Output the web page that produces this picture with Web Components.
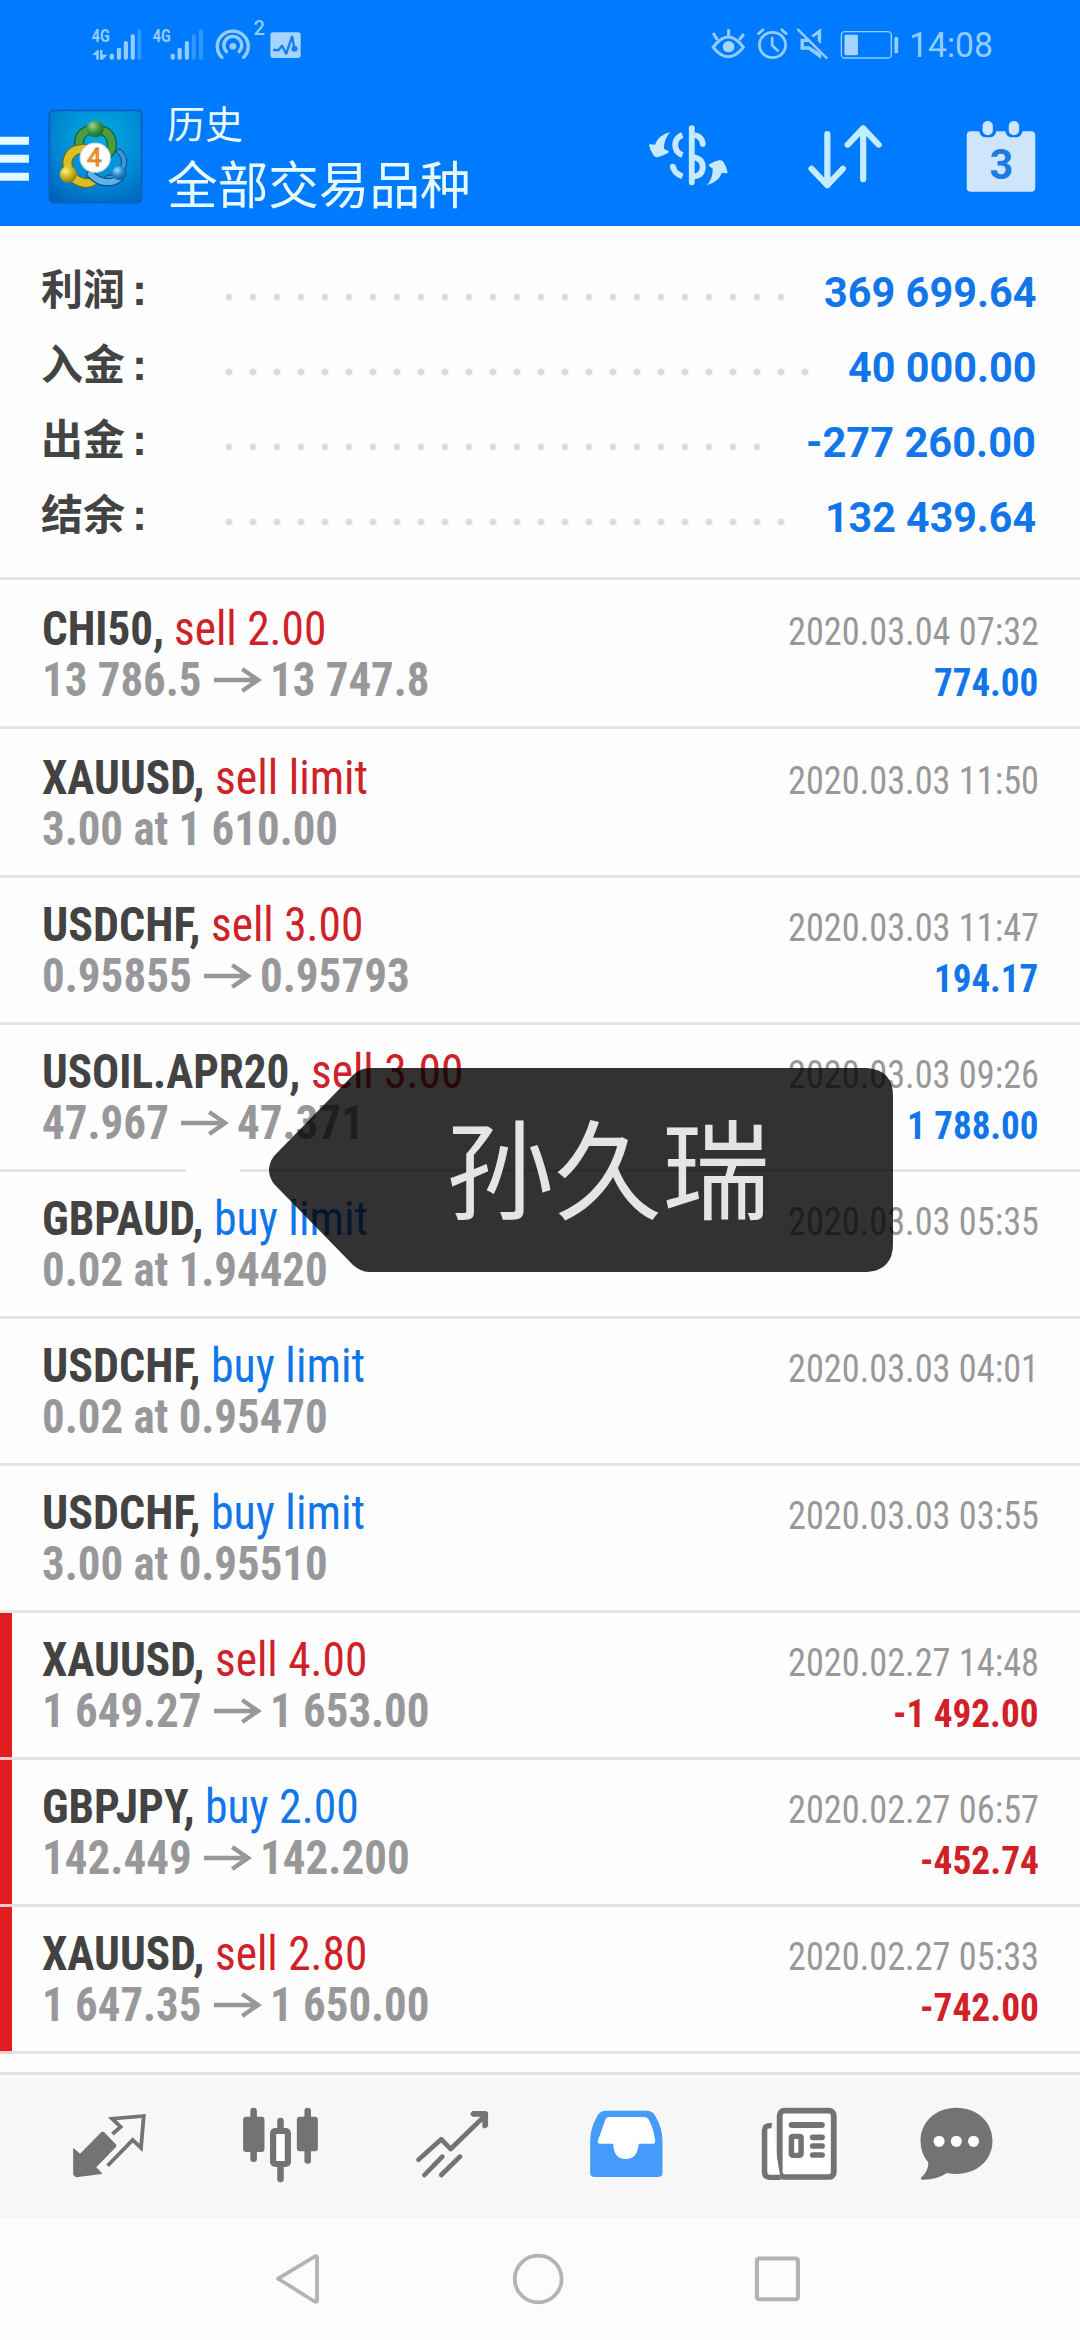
<!DOCTYPE html>
<html lang="zh-CN">
<head>
<meta charset="utf-8">
<title>历史</title>
<style>
html,body{margin:0;padding:0;background:#fff}
body{width:1080px;height:2340px;overflow:hidden}
</style>
</head>
<body>
<history-app></history-app>
<script>
// Icon art sits on a grid finer than CSS pixels: 2.9037 units across, 3 units down.
const UX = 2.9037, UY = 3;
const bars = (xs, dim) => xs.map((x, i) => {
  const top = [160, 142, 122, 102, 87][i];
  return `<rect x="${x - 6}" y="${top}" width="12" height="${178 - top}" rx="5" fill="${i >= dim ? '#2f97ff' : '#93cdff'}"/>`;
}).join('');
const ICONS = {
  menu: [0, 400, 84, 150, `<path fill="#e6f9ff" d="M0 411h84v24H0zM0 465h84v24H0zM0 519h84v24H0z"/>`],
  logo: [138, 327, 276, 285, `
    <defs>
      <radialGradient id="bg" cx=".55" cy=".3" r=".85"><stop offset="0" stop-color="#00aee2"/><stop offset=".55" stop-color="#0089d4"/><stop offset="1" stop-color="#0060b8"/></radialGradient>
      <radialGradient id="g" cx=".35" cy=".3" r=".8"><stop offset="0" stop-color="#9ed38c"/><stop offset=".5" stop-color="#3a9440"/><stop offset="1" stop-color="#176127"/></radialGradient>
      <radialGradient id="y" cx=".35" cy=".3" r=".8"><stop offset="0" stop-color="#fff27a"/><stop offset=".5" stop-color="#c9b31c"/><stop offset="1" stop-color="#7d7010"/></radialGradient>
      <radialGradient id="b" cx=".35" cy=".3" r=".8"><stop offset="0" stop-color="#9fdcff"/><stop offset=".5" stop-color="#2b86cf"/><stop offset="1" stop-color="#0d4e99"/></radialGradient>
    </defs>
    <rect x="142" y="331" width="268" height="277" rx="12" fill="url(#bg)" stroke="#0b5fc0" stroke-width="5"/>
    <g fill="none" stroke-linecap="round">
      <path d="M312 535q44-6 47-49q0-18-14-31" stroke="#0c4d8e" stroke-width="18"/><path d="M312 535q44-6 47-49q0-18-14-31" stroke="#3f97d0" stroke-width="12"/>
      <path d="M228 432q0-42 47-45q47 3 49 47q0 16-12 28" stroke="#145c2c" stroke-width="29"/><path d="M228 432q0-42 47-45q47 3 49 47q0 16-12 28" stroke="#4b9c42" stroke-width="22"/>
      <path d="M242 446q-44 2-48 42q4 52 50 61q18 2 28-9" stroke="#6f690c" stroke-width="30"/><path d="M242 446q-44 2-48 42q4 52 50 61q18 2 28-9" stroke="#d6bf28" stroke-width="23"/>
      <path d="M262 523q20 22 46 24q33 0 44-25" stroke="#0c4d8e" stroke-width="25"/><path d="M262 523q20 22 46 24q33 0 44-25" stroke="#5db2e6" stroke-width="18"/>
    </g>
    <circle cx="275" cy="387" r="25" fill="url(#g)"/><circle cx="197" cy="523" r="25" fill="url(#y)"/><circle cx="345" cy="519" r="21" fill="url(#b)"/>
    <circle cx="275" cy="473" r="44" fill="#fff" stroke="#c6cfd4" stroke-width="3"/>
    <text x="273" y="499" text-anchor="middle" font-family="Roboto" font-weight="400" font-size="76" fill="#f7a14a" stroke="#dd7722" stroke-width="2.500">4</text>`],
  signalA: [256, 56, 162, 128, `<text x="267" y="126" textLength="52" lengthAdjust="spacingAndGlyphs" font-family="Roboto" font-weight="700" font-size="57" fill="#93cdff">4G</text>
    <path fill="#93cdff" d="M268 163l16-14h3v29h-7v-13zM291 149h7v14h15l-15 15h-7z"/>${bars([325, 346, 366, 386, 405], 4)}`],
  signalB: [434, 56, 162, 128, `<text x="445" y="126" textLength="52" lengthAdjust="spacingAndGlyphs" font-family="Roboto" font-weight="700" font-size="57" fill="#93cdff">4G</text>${bars([503, 523, 544, 564, 585], 3)}`],
  hotspot: [620, 34, 156, 150, `<g fill="none" stroke="#93cdff" stroke-width="10" stroke-linecap="round"><path d="M643 173A45 46 0 1 1 706 173"/><path d="M656 156A26 27 0 1 1 693 156"/></g><circle cx="675" cy="140" r="10" fill="#93cdff"/>
    <text x="735" y="106" textLength="33" lengthAdjust="spacingAndGlyphs" font-family="Roboto" font-size="62" font-weight="500" fill="#93cdff">2</text>`],
  pulse: [780, 90, 96, 90, `<rect x="784" y="97" width="88" height="77" rx="8" fill="#a6d3ff"/><path d="M792 150h16l10-13 12 24 17-51 7 36" fill="none" stroke="#1780ee" stroke-width="7" stroke-linejoin="round"/><circle cx="854" cy="146" r="9" fill="#1780ee"/>`],
  eye: [494, 82, 108, 102, `<g fill="none" stroke="#93cdff" stroke-width="9" stroke-linecap="round"><path d="M503 143q44-62 88 0q-44 56-88 0z" stroke-linejoin="round"/><path d="M548 92v17M505 103l9 15M590 106l-9 12"/></g><circle cx="548" cy="141" r="17" fill="#a6d3ff"/>`],
  alarm: [626, 82, 96, 102, `<g fill="none" stroke="#93cdff" stroke-width="8" stroke-linecap="round"><circle cx="674" cy="136" r="38"/><path d="M673 115v22l16 16M633 102l13-12M714 102l-13-12"/></g>`],
  mute: [744, 82, 98, 102, `<path d="M788 108l29-23v48l-10-9v-20l-12 9zM779 117h-22v33h23l37 28v-14l-10-9-25-15h-15v-13h18z" fill="#93cdff"/><path d="M750 90l83 85" stroke="#93cdff" stroke-width="7" stroke-linecap="round"/>`],
  battery: [872, 86, 174, 96, `<rect x="876" y="94" width="145" height="79" rx="10" fill="none" stroke="#93cdff" stroke-width="4"/><rect x="885" y="103" width="39" height="62" rx="4" fill="#a6d3ff"/><rect x="1030" y="109" width="11" height="50" rx="5" fill="#93cdff"/>`],
  currency: [312, 365, 242, 200, `<path d="M442 383v163" stroke="#c6eaff" stroke-width="17" stroke-linecap="round"/>
    <g fill="none" stroke="#c6eaff" stroke-width="17"><path d="M415 404q-21 8-21 30t21 30"/><path d="M450 404q22 5 24 26" /><path d="M442 470q32 3 32 30t-32 30"/><path d="M388 500q3 19 27 28"/></g>
    <g fill="#c6eaff"><circle cx="474" cy="431" r="8.500"/><circle cx="387" cy="499" r="8.500"/><path d="M379 395q-18 22-18 50l14 8q2 2-2 5q-18 10-32 13q-6 0-10-6q-10-14-13-31q0-3 4-2l13 1q8-27 44-38z"/><path d="M486 555q17-20 17-50l-11-8q-2-3 2-6q15-9 29-12q7 0 11 6q9 14 12 31q0 4-4 3l-13-2q-6 25-43 38z"/></g>`],
  sort: [772, 365, 226, 210, `<path d="M834 401v154M788 505l46 50 45-50M938 537V384M893 433l45-49 45 49" fill="none" stroke="#c2edff" stroke-width="18" stroke-linecap="round" stroke-linejoin="round"/>`],
  calendar: [1234, 356, 210, 224, `<rect x="1239" y="393" width="199" height="181" rx="12" fill="#cfe5fc"/><rect x="1275" y="356" width="50" height="55" rx="20" fill="#007aff"/><rect x="1351" y="356" width="50" height="55" rx="20" fill="#007aff"/><rect x="1285" y="362" width="30" height="43" rx="15" fill="#cfe5fc"/><rect x="1361" y="362" width="30" height="43" rx="15" fill="#cfe5fc"/>
    <text x="1340" y="535" text-anchor="middle" textLength="69" lengthAdjust="spacingAndGlyphs" font-family="Roboto" font-weight="700" font-size="126" fill="#1c7ce6">3</text>`],
  arrow: [621, 258, 131, 78, `<path d="M621 297h128M703 264l46 33-46 33" fill="none" stroke="#98989b" stroke-width="13"/>`],
  quotes: [196, 120, 240, 260, `<path d="M211 263l20 18 63-66 6 0 36 39 0 6-58 62 16 16v4l-75 10-8-8z" fill="#737373"/><path d="M325 222l24-21-25-25 92-8-8 96-24-24-73 77" fill="none" stroke="#737373" stroke-width="11"/>`],
  chart: [694, 120, 240, 260, `<g fill="#737373"><rect x="706" y="170" width="62" height="106" rx="9"/><rect x="727" y="143" width="19" height="163" rx="9"/><rect x="862" y="170" width="61" height="104" rx="9"/><rect x="884" y="143" width="19" height="168" rx="9"/><rect x="805" y="173" width="19" height="36" rx="9"/><rect x="805" y="314" width="19" height="53" rx="9"/></g><rect x="793" y="213" width="43" height="99" rx="6" fill="#fff" stroke="#737373" stroke-width="18"/>`],
  trade: [1194, 120, 240, 260, `<path d="M1216 299l66-61 27 29 100-100M1233 345l52-55M1282 345l54-55" fill="none" stroke="#737373" stroke-width="14" stroke-linecap="round" stroke-linejoin="round"/><path d="M1373 153h36q9 0 9 9v36q-8 13-17 3v-26l-6-5h-22q-13-8 0-17z" fill="#737373"/>`],
  inbox: [130, 120, 240, 260, `<path d="M189 152h121q15 0 23 14q22 38 22 76v96q0 13-13 13H158q-13 0-13-13v-96q0-38 22-76q8-14 22-14z" fill="#449bfa"/><path d="M198 171h102q11 0 16 9q13 27 18 62q0 9-6 9h-42q-3 46-38 46t-36-46h-38q-10 0-6-11l20-58q4-11 10-11z" fill="#fff"/>`],
  news: [634, 120, 240, 260, `<rect x="697" y="152" width="157" height="199" rx="14" fill="#fff" stroke="#737373" stroke-width="17"/><path d="M674 197q-21-2-21 14v124q0 17 16 17h30" fill="#fff" stroke="#737373" stroke-width="16"/><rect x="723" y="186" width="105" height="18" rx="9" fill="#737373"/><rect x="731" y="229" width="28" height="57" rx="4" fill="#fff" stroke="#737373" stroke-width="16"/><path d="M793 232h27M793 258h27M793 285h27" stroke="#737373" stroke-width="17" stroke-linecap="round"/>`],
  chat: [1090, 120, 240, 260, `<path d="M1210 143c60 0 105 42 105 100s-46 99-105 99q-14 0-27-3q-32 21-70 20q-10 0-4-7q19-19 20-44q-23-28-23-65c0-58 45-100 104-100z" fill="#737373"/><g fill="#fff"><ellipse cx="1160" cy="244" rx="16" ry="17"/><ellipse cx="1210" cy="244" rx="16" ry="17"/><ellipse cx="1260" cy="244" rx="16" ry="17"/></g>`],
  back: [796, 576, 136, 162, `<path d="M915 589L808 656 915 725q6 3 6-4V593q0-7-6-4z" fill="none" stroke="#b3b3b3" stroke-width="11" stroke-linejoin="round"/>`],
  home: [1484, 576, 158, 162, `<ellipse cx="1563" cy="657" rx="68" ry="70" fill="none" stroke="#b3b3b3" stroke-width="11"/>`],
  recent: [620, 576, 144, 162, `<rect x="631.500" y="595.500" width="119" height="122" rx="6" fill="none" stroke="#b3b3b3" stroke-width="12"/>`]
};

class AppIcon extends HTMLElement {
  connectedCallback() {
    const [x, y, w, h, art] = ICONS[this.getAttribute('name')];
    this.attachShadow({mode: 'open'}).innerHTML =
      `<style>:host{display:block;flex:none}svg{display:block;overflow:visible}</style>
      <svg width="${w / UX}" height="${h / UY}" viewBox="${x} ${y} ${w} ${h}" preserveAspectRatio="none">${art}</svg>`;
  }
}
customElements.define('app-icon', AppIcon);

// Condensed lettering: the slotted text is squeezed to the width given in `w`.
class FitText extends HTMLElement {
  connectedCallback() {
    const w = +this.getAttribute('w');
    const root = this.attachShadow({mode: 'open'});
    root.innerHTML = `<style>:host{display:block;flex:none;width:${w}px}span{display:inline-block;white-space:pre;transform-origin:0 50%}</style><span>${this.textContent}</span>`;
    const s = root.querySelector('span');
    s.style.transform = `scaleX(${w / s.getBoundingClientRect().width})`;
  }
}
customElements.define('fit-text', FitText);

class StatusBar extends HTMLElement {
  connectedCallback() {
    this.attachShadow({mode: 'open'}).innerHTML = `<style>
      :host{display:flex;align-items:flex-start;height:70px;color:#93cdff;font:400 35px/40px Roboto,sans-serif}
      .l,.r{display:flex;align-items:flex-start}
      .l{box-sizing:border-box;padding-left:88.200px;width:710.200px;flex:none}
      .r{flex:1}
      </style>
      <div class="l"><app-icon name="signalA" style="margin-top:18.700px"></app-icon><app-icon name="signalB" style="margin:18.700px 0 0 5.500px"></app-icon><app-icon name="hotspot" style="margin:11.300px 0 0 8.300px"></app-icon><app-icon name="pulse" style="margin:30px 0 0 1.400px"></app-icon></div>
      <div class="r"><app-icon name="eye" style="margin-top:27.300px"></app-icon><app-icon name="alarm" style="margin:27.300px 0 0 8.300px"></app-icon><app-icon name="mute" style="margin:27.300px 0 0 7.600px"></app-icon><app-icon name="battery" style="margin:28.700px 0 0 10.300px"></app-icon><fit-text w="84" style="margin:25.500px 0 0 9.200px">14:08</fit-text></div>`;
  }
}
customElements.define('status-bar', StatusBar);

class TitleBar extends HTMLElement {
  connectedCallback() {
    this.attachShadow({mode: 'open'}).innerHTML = `<style>
      :host{display:flex;align-items:flex-start;height:156px;color:#e6faff;font-family:"Noto Sans CJK SC",sans-serif}
      .t{margin:24px 0 0 24.500px;width:480.300px;flex:none}
      .a{font-size:38px;line-height:55px}.b{font-size:50.600px;line-height:66px}
      </style>
      <app-icon name="menu" style="margin-top:63.300px"></app-icon>
      <app-icon name="logo" style="margin:39px 0 0 18.600px"></app-icon>
      <div class="t"><div class="a">历史</div><div class="b">全部交易品种</div></div>
      <app-icon name="currency" style="margin-top:51.700px"></app-icon>
      <app-icon name="sort" style="margin:51.700px 0 0 75.100px"></app-icon>
      <app-icon name="calendar" style="margin:48.700px 0 0 81.300px"></app-icon>`;
  }
}
customElements.define('title-bar', TitleBar);

class SummaryRow extends HTMLElement {
  connectedCallback() {
    const g = n => this.getAttribute(n);
    this.attachShadow({mode: 'open'}).innerHTML = `<style>
      :host{display:flex;align-items:flex-start;height:75px}
      .k{font:700 42px/61px "Noto Sans CJK SC",sans-serif;color:#434343;width:176px;padding-left:41px;flex:none;white-space:nowrap}
      .k span{font-family:"Liberation Sans";font-size:45px;margin-left:7px;line-height:1px}
      .d{height:24px;margin-top:29px;width:${24 * g('dots')}px;background:radial-gradient(circle at 12px 12px,#d9d9d9 2.300px,#ececec 3.400px,transparent 4.400px) 0 0/24px 24px repeat-x}
      .v{margin-left:auto;margin-right:44px;font:700 42px/74px Roboto,sans-serif;color:#1076ea}
      </style><div class="k">${g('label')}<span>:</span></div><div class="d"></div><fit-text class="v" w="${g('w')}">${g('value')}</fit-text>`;
  }
}
customElements.define('summary-row', SummaryRow);

class DealRow extends HTMLElement {
  connectedCallback() {
    const d = JSON.parse(this.textContent);
    const price = d.to
      ? `<fit-text w="${d.pw}">${d.from}</fit-text><app-icon name="arrow"></app-icon><fit-text w="${d.pw}">${d.to}</fit-text>`
      : `<fit-text w="${d.pw}">${d.from}</fit-text>`;
    const profit = d.pl ? `<fit-text class="${d.pl[0] === '-' ? 'sell' : 'buy'} p" w="${d.plw}">${d.pl}</fit-text>` : '';
    this.attachShadow({mode: 'open'}).innerHTML = `<style>
      :host{display:flex;box-sizing:border-box;flex-direction:column;height:${d.tall ? 149 : 147}px;font-family:"Roboto Condensed",Roboto,sans-serif}
      .m{flex:1;display:flex;justify-content:space-between;box-sizing:border-box;padding:${d.tall ? 23 : 21}px 41.500px 0 ${d.loss ? 30 : 42}px;${d.loss ? 'border-left:12px solid #e01c1e' : ''}}
      .s{height:3px;background:${d.gap ? 'linear-gradient(90deg,#e4e4e4 186px,#fff 186px 240px,#e4e4e4 240px)' : d.loss ? 'linear-gradient(90deg,#f7caca 12px,#e4e4e4 12px)' : '#e4e4e4'}}
      .l{display:flex;height:51px;font-size:48px;line-height:51px}
      .b{font-weight:700;color:#434343}.g{font-weight:700;color:#98989b}
      .g app-icon{margin:13px 11.100px 0 12.300px}
      .r{display:flex;flex-direction:column;align-items:flex-end;padding-top:4px;font-size:39px;line-height:51px;color:#98989a}
      .sell{color:#cf2127}.buy{color:#1076ea}.p{font-weight:700}
      </style>
      <div class="m"><div><div class="l"><fit-text class="b" w="${d.sw}">${d.sym}, </fit-text><fit-text class="${d.act.split(' ')[0]}" w="${d.aw}">${d.act}</fit-text></div>
      <div class="l g">${price}</div></div>
      <div class="r"><fit-text w="251">${d.time}</fit-text>${profit}</div></div><div class="s"></div>`;
  }
}
customElements.define('deal-row', DealRow);

class NameBubble extends HTMLElement {
  connectedCallback() {
    this.attachShadow({mode: 'open'}).innerHTML = `<style>
      :host{position:absolute;left:269px;top:1068px;width:624px;height:204px}
      svg{position:absolute;inset:0}
      div{position:relative;padding-left:177px;font:400 108px/192px "Noto Sans CJK SC",sans-serif;color:#e5e5e5;white-space:nowrap}
      </style><svg width="624" height="204" viewBox="0 0 624 204"><path d="M100 0H598Q624 2 624 28V176Q624 202 598 204H100Q92 204 84 197L5 116Q-5 102 5 88L84 7Q92 0 100 0Z" fill="#000" fill-opacity=".805"/></svg><div><slot></slot></div>`;
  }
}
customElements.define('name-bubble', NameBubble);

class TabBar extends HTMLElement {
  connectedCallback() {
    this.attachShadow({mode: 'open'}).innerHTML = `<style>
      :host{display:grid;box-sizing:border-box;height:146px;border-top:3px solid #e1e1e1;background:#f7f7f7;padding:25px 0 0 67.500px;grid-template-columns:171.500px 172.200px 173.500px 173.600px 157.100px 83px}
      </style>${['quotes', 'chart', 'trade', 'inbox', 'news', 'chat'].map(n => `<app-icon name="${n}"></app-icon>`).join('')}`;
  }
}
customElements.define('tab-bar', TabBar);

class NavBar extends HTMLElement {
  connectedCallback() {
    this.attachShadow({mode: 'open'}).innerHTML = `<style>
      :host{display:flex;box-sizing:border-box;height:122px;background:#fcfcfc;padding:34px 0 0 274.100px}
      </style><app-icon name="back"></app-icon><app-icon name="home" style="margin-left:190.100px"></app-icon><app-icon name="recent" style="margin-left:188px"></app-icon>`;
  }
}
customElements.define('nav-bar', NavBar);

const DEALS = [
  {sym: 'CHI50', sw: 132.4, act: 'sell 2.00', aw: 152.3, from: '13 786.5', to: '13 747.8', pw: 159.5, time: '2020.03.04 07:32', pl: '774.00', plw: 104.3, tall: 1},
  {sym: 'XAUUSD', sw: 172.7, act: 'sell limit', aw: 153, from: '3.00 at 1 610.00', pw: 296, time: '2020.03.03 11:50', tall: 1},
  {sym: 'USDCHF', sw: 169, act: 'sell 3.00', aw: 152.3, from: '0.95855', to: '0.95793', pw: 149.7, time: '2020.03.03 11:47', pl: '194.17', plw: 104.3},
  {sym: 'USOIL.APR20', sw: 268.8, act: 'sell 3.00', aw: 152.3, from: '47.967', to: '47.371', pw: 126.9, time: '2020.03.03 09:26', pl: '1 788.00', plw: 131.5, gap: 1},
  {sym: 'GBPAUD', sw: 172, act: 'buy limit', aw: 154, from: '0.02 at 1.94420', pw: 285.7, time: '2020.03.03 05:35'},
  {sym: 'USDCHF', sw: 169, act: 'buy limit', aw: 154, from: '0.02 at 0.95470', pw: 285.7, time: '2020.03.03 04:01'},
  {sym: 'USDCHF', sw: 169, act: 'buy limit', aw: 154, from: '3.00 at 0.95510', pw: 285.7, time: '2020.03.03 03:55'},
  {sym: 'XAUUSD', sw: 172.7, act: 'sell 4.00', aw: 152.3, from: '1 649.27', to: '1 653.00', pw: 159.5, time: '2020.02.27 14:48', pl: '-1 492.00', plw: 145.5, loss: 1},
  {sym: 'GBPJPY', sw: 163, act: 'buy 2.00', aw: 153.8, from: '142.449', to: '142.200', pw: 149.7, time: '2020.02.27 06:57', pl: '-452.74', plw: 119, loss: 1},
  {sym: 'XAUUSD', sw: 172.7, act: 'sell 2.80', aw: 152.3, from: '1 647.35', to: '1 650.00', pw: 159.5, time: '2020.02.27 05:33', pl: '-742.00', plw: 119, loss: 1}
];

class HistoryApp extends HTMLElement {
  connectedCallback() {
    this.attachShadow({mode: 'open'}).innerHTML = `<style>
      :host{display:flex;flex-direction:column;position:relative;width:1080px;height:2340px;background:#fefefe;overflow:hidden}
      header{background:#007aff;height:226px;flex:none}
      .sum{box-sizing:border-box;height:354px;flex:none;padding-top:30px;border-bottom:3px solid #e4e4e4}
      .list{height:1492px;flex:none}
      </style>
      <header><status-bar></status-bar><title-bar></title-bar></header>
      <section class="sum">
        <summary-row label="利润" dots="24" value="369 699.64" w="212.500"></summary-row>
        <summary-row label="入金" dots="25" value="40 000.00" w="188.500"></summary-row>
        <summary-row label="出金" dots="23" value="-277 260.00" w="230"></summary-row>
        <summary-row label="结余" dots="24" value="132 439.64" w="211"></summary-row>
      </section>
      <section class="list">${DEALS.map(d => `<deal-row>${JSON.stringify(d)}</deal-row>`).join('')}</section>
      <tab-bar></tab-bar><nav-bar></nav-bar>
      <name-bubble>孙久瑞</name-bubble>`;
  }
}
customElements.define('history-app', HistoryApp);
</script>
</body>
</html>
